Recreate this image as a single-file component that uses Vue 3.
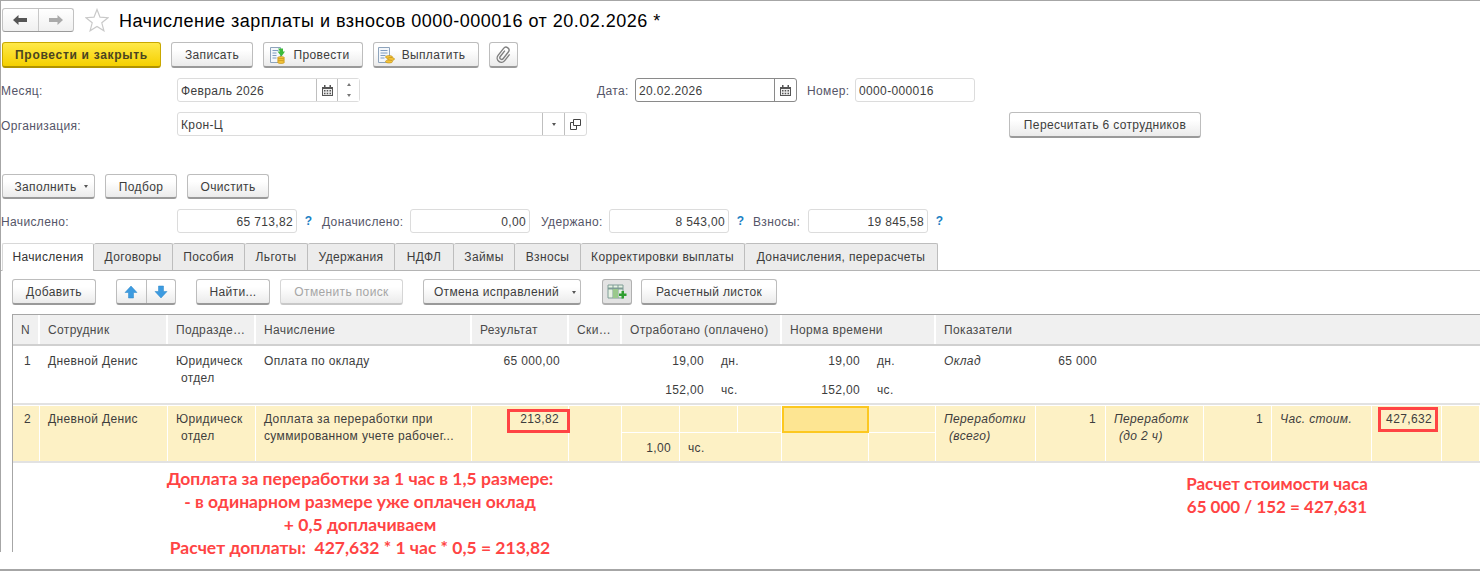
<script setup>
const tabs = [
  { t: 'Начисления', c: 'tw1', active: true },
  { t: 'Договоры', c: 'tw2' },
  { t: 'Пособия', c: 'tw3' },
  { t: 'Льготы', c: 'tw4' },
  { t: 'Удержания', c: 'tw5' },
  { t: 'НДФЛ', c: 'tw6' },
  { t: 'Займы', c: 'tw7' },
  { t: 'Взносы', c: 'tw8' },
  { t: 'Корректировки выплаты', c: 'tw9' },
  { t: 'Доначисления, перерасчеты', c: 'tw10' },
]
const heads = ['N', 'Сотрудник', 'Подразде…', 'Начисление', 'Результат', 'Ски…', 'Отработано (оплачено)', 'Норма времени', 'Показатели']
</script>

<template>
  <div class="frame">
    <header class="row head">
      <div class="nav">
        <span class="nav-part">
          <svg width="16" height="12" viewBox="0 0 16 12"><path d="M1 6 6.500 1v3H15v4H6.500v3z" fill="#555"/></svg>
        </span>
        <span class="nav-part">
          <svg width="16" height="12" viewBox="0 0 16 12"><path d="M15 6 9.500 1v3H1v4h8.500v3z" fill="#aaa"/></svg>
        </span>
      </div>
      <svg class="star" width="24" height="24" viewBox="0 0 24 24"><path d="M12 1.500l3 7.700 8 .5-6.200 5.100 2.100 8L12 18.400l-6.900 4.400 2.100-8L1 9.700l8-.5z" fill="#fff" stroke="#c9c9c9" stroke-width="1.200"/></svg>
      <h1 class="title">Начисление зарплаты и взносов 0000-000016 от 20.02.2026 *</h1>
    </header>

    <div class="row bar1">
      <button class="btn primary w-post">Провести и закрыть</button>
      <button class="btn w-save">Записать</button>
      <button class="btn w-conduct">
        <svg class="ico" width="20" height="18" viewBox="0 0 20 18">
          <path d="M1.500 1.500h10v15h-10z" fill="#f4f7fb" stroke="#8ea4bc"/>
          <path d="M3.500 4.500h6M3.500 7h4M3.500 9.500h4M3.500 12h4" stroke="#7f9cc0"/>
          <path d="M8 1.500h5v3h2l-3.500 5-4-5H10z" transform="translate(1 1)" fill="#3dbb3d"/>
          <ellipse cx="12" cy="12" rx="3.500" ry="1.500" fill="#f5c43a" stroke="#b98a10" stroke-width=".6"/>
          <ellipse cx="12" cy="14" rx="3.500" ry="1.500" fill="#f5c43a" stroke="#b98a10" stroke-width=".6"/>
          <ellipse cx="12" cy="16" rx="3.500" ry="1.500" fill="#f5c43a" stroke="#b98a10" stroke-width=".6"/>
        </svg>
        Провести
      </button>
      <button class="btn w-pay">
        <svg class="ico" width="20" height="18" viewBox="0 0 20 18">
          <path d="M1.500 1.500h11v15h-11z" fill="#f4f7fb" stroke="#8ea4bc"/>
          <path d="M3.500 4.500h7M3.500 7h7M3.500 9.500h5M3.500 12h4" stroke="#7f9cc0"/>
          <ellipse cx="12" cy="11" rx="3.500" ry="1.500" fill="#f5c43a" stroke="#b98a10" stroke-width=".6"/>
          <ellipse cx="14" cy="13" rx="3.500" ry="1.500" fill="#f5c43a" stroke="#b98a10" stroke-width=".6"/>
          <ellipse cx="12" cy="15.500" rx="3.500" ry="1.500" fill="#f5c43a" stroke="#b98a10" stroke-width=".6"/>
        </svg>
        Выплатить
      </button>
      <button class="btn w-clip">
        <svg width="16" height="18" viewBox="0 0 16 18"><path d="M6 5v7.500a1.800 1.800 0 0 0 3.600 0V4a3 3 0 0 0-6 0v9a4.200 4.200 0 0 0 8.400 0V5" transform="rotate(38 8 9)" fill="none" stroke="#808080" stroke-width="1.400"/></svg>
      </button>
    </div>

    <div class="row fields1">
      <label class="lbl l-main">Месяц:</label>
      <div class="field f-month">
        <span class="val">Февраль 2026</span>
        <span class="fbtn b-cal"><svg width="11" height="11" viewBox="0 0 11 11"><path d="M0 2h11v9H0z" fill="#555"/><path d="M1 4h9v6H1z" fill="#eee"/><path d="M2 0h1.500v3H2zM7.500 0H9v3H7.500zM2 5h1.500v1.500H2zM4.700 5h1.500v1.500H4.700zM7.500 5H9v1.500H7.500zM2 7.800h1.500v1.500H2zM4.700 7.800h1.500v1.500H4.700zM7.500 7.800H9v1.500H7.500z" fill="#555"/></svg></span>
        <span class="spin"><span class="tri up"></span><span class="tri down"></span></span>
      </div>
      <label class="lbl l-date">Дата:</label>
      <div class="field f-date focus">
        <span class="val">20.02.2026</span>
        <span class="fbtn b-cal2"><svg width="11" height="11" viewBox="0 0 11 11"><path d="M0 2h11v9H0z" fill="#555"/><path d="M1 4h9v6H1z" fill="#eee"/><path d="M2 0h1.500v3H2zM7.500 0H9v3H7.500zM2 5h1.500v1.500H2zM4.700 5h1.500v1.500H4.700zM7.500 5H9v1.500H7.500zM2 7.800h1.500v1.500H2zM4.700 7.800h1.500v1.500H4.700zM7.500 7.800H9v1.500H7.500z" fill="#555"/></svg></span>
      </div>
      <label class="lbl l-num">Номер:</label>
      <div class="field f-num"><span class="val">0000-000016</span></div>
    </div>

    <div class="row fields2">
      <label class="lbl l-main">Организация:</label>
      <div class="field f-org">
        <span class="val">Крон-Ц</span>
        <span class="fbtn b-drop"><span class="tri down dark"></span></span>
        <span class="fbtn b-open"><svg width="11" height="11" viewBox="0 0 11 11"><path d="M3.500.5h7v6h-7zM3.500 3.500h-3v7h6V7" fill="none" stroke="#444"/></svg></span>
      </div>
      <button class="btn w-recalc">Пересчитать 6 сотрудников</button>
    </div>

    <div class="row bar2">
      <button class="btn w-fill">Заполнить <span class="tri down dark caret"></span></button>
      <button class="btn w-pick">Подбор</button>
      <button class="btn w-clear">Очистить</button>
    </div>

    <div class="row totals">
      <label class="lbl l-main">Начислено:</label>
      <div class="field f-sum"><span class="val num">65 713,82</span></div>
      <span class="q">?</span>
      <label class="lbl l-add">Доначислено:</label>
      <div class="field f-sum"><span class="val num">0,00</span></div>
      <label class="lbl l-hold">Удержано:</label>
      <div class="field f-sum"><span class="val num">8 543,00</span></div>
      <span class="q">?</span>
      <label class="lbl l-fee">Взносы:</label>
      <div class="field f-sum"><span class="val num">19 845,58</span></div>
      <span class="q">?</span>
    </div>

    <nav class="tabs">
      <span v-for="tab in tabs" :key="tab.t" class="tab" :class="[tab.c, { active: tab.active }]">{{ tab.t }}</span>
    </nav>

    <div class="row bar3">
      <button class="btn w-add">Добавить</button>
      <div class="updown">
        <span class="ud"><svg width="14" height="14" viewBox="0 0 14 14"><path d="M7 1l6 6.500H9.500V13h-5V7.500H1z" fill="#3d9be0" stroke="#2a86c9" stroke-width=".5"/></svg></span>
        <span class="ud"><svg width="14" height="14" viewBox="0 0 14 14"><path d="M7 13l6-6.500H9.500V1h-5v5.500H1z" fill="#3d9be0" stroke="#2a86c9" stroke-width=".5"/></svg></span>
      </div>
      <button class="btn w-find">Найти...</button>
      <button class="btn w-cancel disabled">Отменить поиск</button>
      <button class="btn w-undo">Отмена исправлений <span class="tri down dark caret"></span></button>
      <button class="btn w-tbl pressed">
        <svg width="20" height="17" viewBox="0 0 20 17">
          <path d="M1 1h15v13H1z" fill="#e8f3e4" stroke="#7f9c96"/>
          <path d="M1 4.500h15" stroke="#7f9c96" stroke-width="2"/>
          <path d="M6 1v13M11 1v13" stroke="#7f9c96"/>
          <path d="M6 5h5v9H6z" fill="#9ac98c"/>
          <path d="M12 9.500h2.500V7h2.500v2.500h2.500V12H17v2.500h-2.500V12H12z" fill="#2f9e2f"/>
        </svg>
      </button>
      <button class="btn w-sheet">Расчетный листок</button>
    </div>

    <section class="table">
      <div class="grid thead">
        <div v-for="h in heads" :key="h" class="th">{{ h }}</div>
      </div>

      <div class="grid tr r1">
        <div class="td c-n">1</div>
        <div class="td">Дневной Денис</div>
        <div class="td">Юридическ<span class="indent">отдел</span></div>
        <div class="td">Оплата по окладу</div>
        <div class="td right res">65 000,00</div>
        <div class="td"></div>
        <div class="metric m-work">
          <div class="mv">19,00</div><div class="mu">дн.</div>
          <div class="mv">152,00</div><div class="mu">чс.</div>
        </div>
        <div class="metric m-norm">
          <div class="mv">19,00</div><div class="mu">дн.</div>
          <div class="mv">152,00</div><div class="mu">чс.</div>
        </div>
        <div class="indicators">
          <div class="td it">Оклад</div>
          <div class="td right ind-v">65 000</div>
        </div>
      </div>

      <div class="grid tr r2">
        <div class="td c-n">2</div>
        <div class="td">Дневной Денис</div>
        <div class="td">Юридическ<span class="indent">отдел</span></div>
        <div class="td">Доплата за переработки при<br>суммированном учете рабочег...</div>
        <div class="td right res mark-host">213,82<span class="mark mark-a"></span></div>
        <div class="td"></div>
        <div class="sub s-work">
          <div></div><div></div><div></div>
          <div class="right sv">1,00</div><div class="su s-span">чс.</div>
        </div>
        <div class="sub s-norm">
          <div class="current"></div><div></div>
          <div></div><div></div>
        </div>
        <div class="indicators">
          <div class="td it">Переработки<span class="indent">(всего)</span></div>
          <div class="td right ind-v">1</div>
          <div class="td it">Переработк<span class="indent">(до 2 ч)</span></div>
          <div class="td right ind-v2">1</div>
          <div class="td it">Час. стоим.</div>
          <div class="td right ind-v3 mark-host">427,632<span class="mark mark-b"></span></div>
          <div class="td"></div>
        </div>
      </div>

      <div class="notes">
        <p class="note note-l">Доплата за переработки за 1 час в 1,5 размере:<br>- в одинарном размере уже оплачен оклад<br>+ 0,5 доплачиваем<br>Расчет доплаты:&nbsp; 427,632 * 1 час * 0,5 = 213,82</p>
        <p class="note note-r">Расчет стоимости часа<br>65 000 / 152 = 427,631</p>
      </div>
    </section>
  </div>
</template>

<style>
html, body { margin: 0; background: #fff; }
</style>

<style scoped>
.frame {
  position: relative;
  width: 1480px;
  height: 571px;
  box-sizing: border-box;
  border-top: 1px solid #a6a6a6;
  border-bottom: 2px solid #a6a6a6;
  overflow: hidden;
  background: #fff;
  font-family: "Liberation Sans", Arial, sans-serif;
  font-size: 12px;
  letter-spacing: 0.36px;
  color: #3d3d3d;
}
.frame::before {
  content: "";
  position: absolute;
  left: 0;
  top: 0;
  width: 1px;
  height: 551px;
  background: #a6a6a6;
}
.row { display: flex; align-items: center; }
.head { margin-top: 7px; height: 24px; padding-left: 2px; }
.nav {
  display: flex;
  width: 72px;
  height: 24px;
  box-sizing: border-box;
  border: 1px solid #c2c2c2;
  border-bottom-color: #9a9a9a;
  border-radius: 3px;
  background: linear-gradient(#fff, #f0f0f0);
}
.nav-part { flex: 1; display: flex; align-items: center; justify-content: center; }
.nav-part + .nav-part { border-left: 1px solid #c8c8c8; }
.star { margin-left: 11px; }
.title {
  margin: 0 0 0 10px;
  padding-top: 2px;
  font-size: 18px;
  font-weight: 400;
  letter-spacing: 0.5px;
  color: #000;
  line-height: 24px;
  white-space: nowrap;
}
.bar1 { margin-top: 10px; height: 26px; padding-left: 2px; gap: 10px; }
.btn {
  height: 100%;
  box-sizing: border-box;
  padding: 1px 0 0;
  display: flex;
  align-items: center;
  justify-content: center;
  border: 1px solid #bdbdbd;
  border-bottom: 2px solid #9a9a9a;
  border-radius: 3px;
  background: linear-gradient(#fff 30%, #ebebeb);
  font: inherit;
  letter-spacing: inherit;
  color: #3d3d3d;
  white-space: nowrap;
}
.ico { margin-right: 5px; }
.primary {
  background: linear-gradient(#ffe94a, #f5d000);
  border-color: #c9a800;
  border-bottom-color: #b09300;
  font-weight: 700;
  letter-spacing: 0.7px;
  color: #4a4420;
}
.w-post { width: 159px; }
.w-save { width: 82px; }
.w-conduct { width: 100px; padding-right: 8px; }
.w-pay { width: 106px; padding-right: 10px; }
.w-clip { width: 29px; }

.lbl { color: #555568; white-space: nowrap; flex: none; padding-top: 1px; }
.l-main { width: 176px; padding-left: 1px; }
.field {
  display: flex;
  align-items: stretch;
  height: 24px;
  box-sizing: border-box;
  border: 1px solid #dcdcdc;
  border-radius: 3px;
  background: #fff;
  flex: none;
}
.val { flex: 1; padding: 0 3px; line-height: 24px; height: 22px; color: #3d3d3d; white-space: nowrap; }
.num { text-align: right; padding-right: 3px; }
.fbtn { display: flex; align-items: center; justify-content: center; border-left: 1px solid #bfbfbf; flex: none; }
.fields1 { margin-top: 10px; height: 24px; }
.f-month { width: 183px; }
.b-cal { width: 20px; }
.spin { width: 21px; display: flex; flex-direction: column; border-left: 1px solid #bfbfbf; align-items: center; justify-content: space-around; background: linear-gradient(#fff 49%, #ccc 49%, #ccc 52%, #fff 52%); }
.tri { display: block; width: 0; height: 0; border-left: 2.500px solid transparent; border-right: 2.500px solid transparent; }
.tri.up { border-bottom: 3px solid #777; }
.tri.down { border-top: 3px solid #777; }
.tri.dark { border-top-color: #555; }
.caret { margin-left: 7px; }
.l-date { margin-left: 237px; width: 38px; }
.f-date { width: 162px; }
.focus { border-color: #8a8a8a; }
.b-cal2 { width: 21px; border-left-color: #8a8a8a; }
.l-num { margin-left: 10px; width: 48px; }
.f-num { width: 120px; }
.fields2 { margin-top: 10px; height: 26px; }
.f-org { width: 410px; align-self: flex-start; }
.b-drop { width: 21px; }
.b-open { width: 21px; }
.w-recalc { width: 192px; margin-left: 422px; }
.bar2 { margin-top: 36px; height: 25px; padding-left: 2px; gap: 10px; }
.w-fill { width: 93px; padding-left: 5px; }
.w-pick { width: 72px; }
.w-clear { width: 82px; }
.totals { margin-top: 10px; height: 24px; }
.f-sum { width: 120px; }
.q { width: 23px; margin-left: 0; text-align: center; color: #1a7fc4; font-weight: 700; font-size: 12px; flex: none; }
.l-add { width: 90px; padding-left: 2px; box-sizing: border-box; }
.l-hold { width: 79px; margin-left: 0; padding-left: 11px; box-sizing: border-box; }
.l-fee { width: 56px; padding-left: 1px; box-sizing: border-box; margin-left: 0; }

.tabs {
  display: flex;
  margin-top: 10px;
  height: 28px;
  box-sizing: border-box;
  padding-left: 2px;
  border-bottom: 1px solid #b4b4b4;
}
.tab {
  height: 27px;
  box-sizing: border-box;
  display: flex;
  align-items: center;
  justify-content: center;
  padding-bottom: 1px;
  background: #ececec;
  border: 1px solid #bdbdbd;
  border-left: none;
  border-bottom: none;
  border-radius: 2px 2px 0 0;
  color: #3d3d3d;
  white-space: nowrap;
}
.tab.active {
  background: #fff;
  height: 28px;
  padding-bottom: 2px;
  border-left: 1px solid #d8d8d8;
  border-top-color: #d8d8d8;
  border-right-color: #bdbdbd;
  color: #333;
}
.tw1 { width: 92px; }
.tw2 { width: 79px; }
.tw3 { width: 72px; }
.tw4 { width: 63px; }
.tw5 { width: 87px; }
.tw6 { width: 59px; }
.tw7 { width: 61px; }
.tw8 { width: 66px; }
.tw9 { width: 164px; }
.tw10 { width: 193px; }

.bar3 { margin-top: 8px; height: 26px; padding-left: 12px; }
.w-add { width: 84px; }
.updown {
  display: flex;
  width: 60px;
  height: 26px;
  margin-left: 20px;
  box-sizing: border-box;
  border: 1px solid #bdbdbd;
  border-bottom: 2px solid #9a9a9a;
  border-radius: 3px;
  background: linear-gradient(#fff 30%, #ebebeb);
}
.ud { flex: 1; display: flex; align-items: center; justify-content: center; }
.ud + .ud { border-left: 1px solid #bdbdbd; }
.w-find { width: 74px; margin-left: 20px; }
.w-cancel { width: 123px; margin-left: 10px; }
.disabled { color: #a6a6a6; border-color: #d6d6d6; border-bottom-color: #c8c8c8; }
.w-undo { width: 158px; margin-left: 20px; padding-left: 6px; }
.w-undo .caret { margin-left: 13px; }
.w-tbl { width: 30px; margin-left: 21px; }
.pressed { background: #e3e3e3; border-color: #b0b0b0; }
.w-sheet { width: 136px; margin-left: 9px; }

.table {
  margin: 9px 0 0 12px;
  height: 238px;
  box-sizing: border-box;
  border-left: 1px solid #a6a6a6;
  border-top: 1px solid #a6a6a6;
}
.grid {
  display: grid;
  grid-template-columns: 27px 128px 88px 216px 97px 53px 160px 154px 1fr;
}
.thead { height: 31px; box-sizing: border-box; border-bottom: 2px solid #d0d0d0; }
.th {
  background: #f0f0f0;
  border-right: 2px solid #fff;
  padding-left: 8px;
  line-height: 30px;
  height: 29px;
  white-space: nowrap;
  overflow: hidden;
  color: #4a4a4a;
}
.th:last-child { border-right: none; }
.tr { border-bottom: 2px solid #e2e2e2; }
.r1 { height: 59px; box-sizing: border-box; }
.r2 { height: 58px; box-sizing: border-box; background: #fdf1c5; border-top: 1px solid #fff; }
.td { padding: 7px 0 0 8px; line-height: 17px; white-space: nowrap; min-width: 0; }
.c-n { padding-left: 11px; }
.r2 .td { padding-top: 5px; border-right: 1px solid #fff; }
.indent { display: block; margin-left: 5px; }
.right { text-align: right; }
.res { padding-right: 9px; }
.mark-host { position: relative; }
.mark { position: absolute; box-sizing: border-box; border: 3px solid #f44; }
.mark-a { top: 3px; right: -2px; width: 63px; height: 24px; }
.mark-b { top: 1px; right: 3px; width: 60px; height: 25px; }
.metric { display: grid; grid-template-rows: 29px 28px; }
.m-work { grid-template-columns: 82px 78px; }
.m-norm { grid-template-columns: 78px 76px; }
.mv { text-align: right; padding-top: 7px; line-height: 17px; }
.mu { padding: 7px 0 0 17px; line-height: 17px; }
.indicators { display: grid; grid-template-columns: 100px 70px 98px 68px 100px 70px 38px; }
.it { font-style: italic; }
.ind-v { padding-right: 9px; }
.ind-v2 { padding-right: 8px; }
.ind-v3 { padding-right: 9px; }
.sub { display: grid; grid-template-rows: 27px 1fr; }
.sub > div { border-right: 1px solid #fff; }
.s-work { grid-template-columns: 58px 58px 44px; }
.s-work > div:nth-child(-n+3), .s-norm > div:nth-child(-n+2) { border-bottom: 1px solid #fff; }
.s-norm { grid-template-columns: 87px 67px; }
.sv { padding: 7px 8px 0 0; line-height: 17px; }
.su { padding: 7px 0 0 8px; line-height: 17px; }
.s-span { grid-column: span 2; }
.current { background: #fde592; border: 2px solid #fcc820 !important; box-sizing: border-box; }

.notes {
  display: grid;
  grid-template-columns: 694px 367px 406px;
  margin-top: 4px;
  font-family: Lato, "Noto Sans", sans-serif;
  font-weight: 700;
  font-size: 17.500px;
  line-height: 23px;
  letter-spacing: 0;
  color: #f44;
  text-align: center;
}
.note { margin: 0; white-space: nowrap; }
.note-l { grid-column: 1; }
.note-r { grid-column: 3; padding-top: 5px; font-size: 17px; }
</style>
